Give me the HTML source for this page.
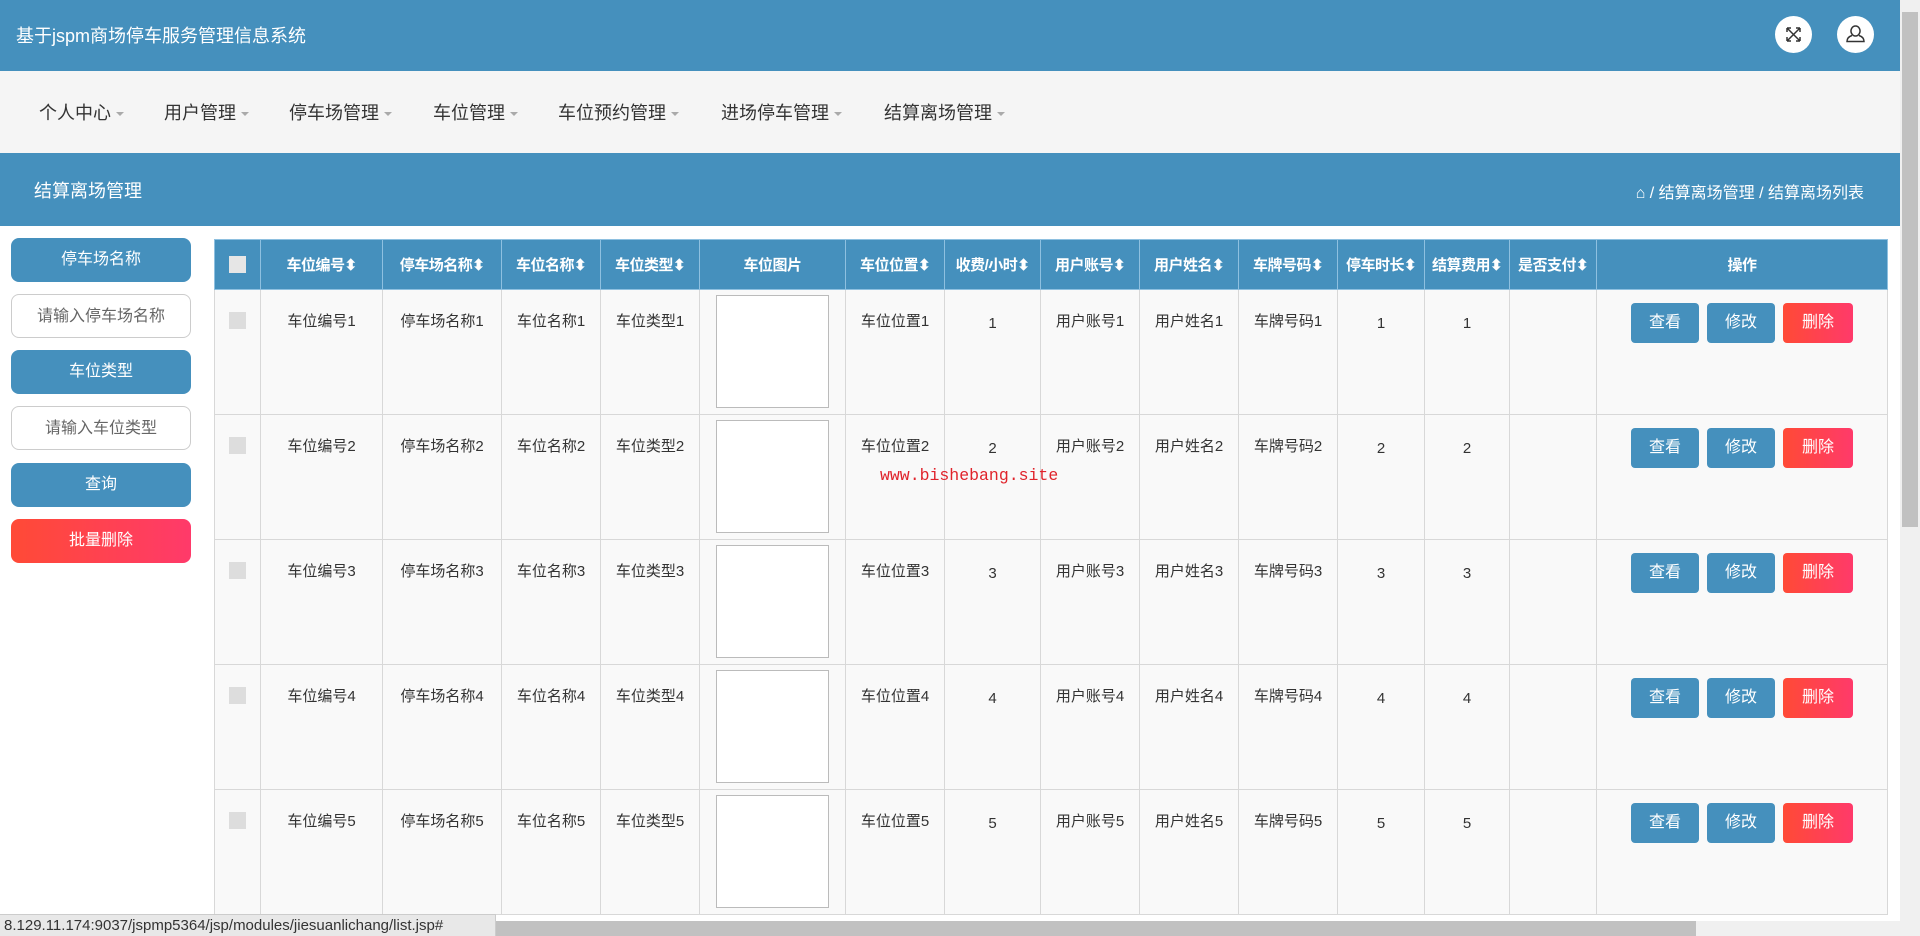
<!DOCTYPE html>
<html><head><meta charset="utf-8"><style>
*{box-sizing:border-box;margin:0;padding:0}
body{width:1920px;height:936px;overflow:hidden;background:#fff;font-family:"Liberation Sans","Noto Sans CJK SC",sans-serif;position:relative}
.hdr{position:absolute;left:0;top:0;width:1900px;height:71px;background:#4590bd}
.hdr .t{position:absolute;left:16px;top:22px;color:#fff;font-size:18px}
.circ{position:absolute;top:16px;width:37px;height:37px;border-radius:50%;background:#fff}
.nav{position:absolute;left:0;top:71px;width:1900px;height:82px;background:#f5f5f5}
.nav span{position:absolute;top:28px;font-size:18px;color:#333}
.nav span i{display:inline-block;width:0;height:0;border-left:4px solid transparent;border-right:4px solid transparent;border-top:4px solid #aaa;margin-left:5px;vertical-align:middle}
.ban{position:absolute;left:0;top:153px;width:1900px;height:73px;background:#4590bd;color:#fff}
.ban .l{position:absolute;left:34px;top:24px;font-size:18px}
.ban .r{position:absolute;right:36px;top:26px;font-size:16px}
.sb{position:absolute;left:11px;width:180px;height:44px;border-radius:8px;text-align:center;line-height:44px;font-size:16px;color:#fff;background:#4590bd}
.sb.in{background:#fff;border:1.5px solid #ccc;color:#666}
.sb.red{background:linear-gradient(90deg,#ff4a36,#ff3a6a)}
table{position:absolute;left:214px;top:239px;border-collapse:collapse;table-layout:fixed;width:1673px}
th{background:#4590bd;color:#fff;font-size:15px;height:50px;border:1px solid #8ec0e0;font-weight:bold;white-space:nowrap;letter-spacing:-0.5px}
td{background:#f9f9f9;border:1px solid #d8d8d8;height:125px;vertical-align:top;text-align:center;font-size:15px;color:#333;padding-top:22px;line-height:20px}
td.n{padding-top:24px}
.cb{display:inline-block;width:17px;height:17px;background:#ddd;margin-top:0}
th .cb{background:#e6e6e6;vertical-align:middle}
.img{width:113px;height:113px;border:1px solid #bbb;margin:-17px auto 0;background:#fff}
.b{display:inline-block;width:68px;height:40px;line-height:40px;border-radius:4px;color:#fff;font-size:16px;background:#4590bd;margin:-9px 4px 0}
.b.d{background:linear-gradient(90deg,#ff4a36,#ff3a6a);width:70px}
.wm{position:absolute;left:880px;top:466px;color:#e0232b;font-family:"Liberation Mono",monospace;font-size:16.5px}
.st{position:absolute;left:0;top:914px;width:496px;height:22px;background:#e8e8e8;border-top:1px solid #ccc;border-right:1px solid #ccc;font-size:15px;color:#333;padding:2px 0 0 4px;white-space:nowrap}
.hs{position:absolute;left:496px;top:921px;width:1404px;height:15px;background:#f0f0f0}
.hs div{width:1200px;height:15px;background:#c1c1c1}
.vs{position:absolute;left:1900px;top:0;width:20px;height:936px;background:#f0f0f0}
.vs div{position:absolute;left:2px;top:12px;width:16px;height:515px;background:#c1c1c1}
</style></head><body>
<div class="hdr"><div class="t">基于jspm商场停车服务管理信息系统</div>
<div class="circ" style="left:1775px"><svg width="37" height="37" viewBox="0 0 37 37" fill="none" stroke="#333" stroke-width="1.5"><path d="M12 12l13 13M25 12L12 25M12 12h4M12 12v4M25 12h-4M25 12v4M12 25h4M12 25v-4M25 25h-4M25 25v-4"/></svg></div>
<div class="circ" style="left:1837px"><svg width="37" height="37" viewBox="0 0 37 37" fill="none" stroke="#333" stroke-width="1.5"><path d="M18.5 10a4.5 5 0 1 0 0.01 0M15 19.5c-3 1-5 2.5-5 6h17c0-3.5-2-5-5-6"/></svg></div>
</div>
<div class="nav">
<span style="left:39px">个人中心<i></i></span><span style="left:164px">用户管理<i></i></span><span style="left:289px">停车场管理<i></i></span><span style="left:433px">车位管理<i></i></span><span style="left:558px">车位预约管理<i></i></span><span style="left:721px">进场停车管理<i></i></span><span style="left:884px">结算离场管理<i></i></span>
</div>
<div class="ban"><div class="l">结算离场管理</div><div class="r">⌂ / 结算离场管理 / 结算离场列表</div></div>
<div class="sb" style="top:238px">停车场名称</div>
<div class="sb in" style="top:294px">请输入停车场名称</div>
<div class="sb" style="top:350px">车位类型</div>
<div class="sb in" style="top:406px">请输入车位类型</div>
<div class="sb" style="top:463px">查询</div>
<div class="sb red" style="top:519px">批量删除</div>
<table>
<colgroup><col style="width:46px"><col style="width:122px"><col style="width:119px"><col style="width:99px"><col style="width:99px"><col style="width:146px"><col style="width:99px"><col style="width:96px"><col style="width:99px"><col style="width:99px"><col style="width:99px"><col style="width:87px"><col style="width:85px"><col style="width:87px"><col style="width:291px"></colgroup>
<tr><th><span class="cb"></span></th><th>车位编号⬍</th><th>停车场名称⬍</th><th>车位名称⬍</th><th>车位类型⬍</th><th>车位图片</th><th>车位位置⬍</th><th>收费/小时⬍</th><th>用户账号⬍</th><th>用户姓名⬍</th><th>车牌号码⬍</th><th>停车时长⬍</th><th>结算费用⬍</th><th>是否支付⬍</th><th>操作</th></tr>
<tr><td><span class="cb"></span></td><td>车位编号1</td><td>停车场名称1</td><td>车位名称1</td><td>车位类型1</td><td><div class="img"></div></td><td>车位位置1</td><td class="n">1</td><td>用户账号1</td><td>用户姓名1</td><td>车牌号码1</td><td class="n">1</td><td class="n">1</td><td></td><td><span class="b">查看</span><span class="b">修改</span><span class="b d">删除</span></td></tr>
<tr><td><span class="cb"></span></td><td>车位编号2</td><td>停车场名称2</td><td>车位名称2</td><td>车位类型2</td><td><div class="img"></div></td><td>车位位置2</td><td class="n">2</td><td>用户账号2</td><td>用户姓名2</td><td>车牌号码2</td><td class="n">2</td><td class="n">2</td><td></td><td><span class="b">查看</span><span class="b">修改</span><span class="b d">删除</span></td></tr>
<tr><td><span class="cb"></span></td><td>车位编号3</td><td>停车场名称3</td><td>车位名称3</td><td>车位类型3</td><td><div class="img"></div></td><td>车位位置3</td><td class="n">3</td><td>用户账号3</td><td>用户姓名3</td><td>车牌号码3</td><td class="n">3</td><td class="n">3</td><td></td><td><span class="b">查看</span><span class="b">修改</span><span class="b d">删除</span></td></tr>
<tr><td><span class="cb"></span></td><td>车位编号4</td><td>停车场名称4</td><td>车位名称4</td><td>车位类型4</td><td><div class="img"></div></td><td>车位位置4</td><td class="n">4</td><td>用户账号4</td><td>用户姓名4</td><td>车牌号码4</td><td class="n">4</td><td class="n">4</td><td></td><td><span class="b">查看</span><span class="b">修改</span><span class="b d">删除</span></td></tr>
<tr><td><span class="cb"></span></td><td>车位编号5</td><td>停车场名称5</td><td>车位名称5</td><td>车位类型5</td><td><div class="img"></div></td><td>车位位置5</td><td class="n">5</td><td>用户账号5</td><td>用户姓名5</td><td>车牌号码5</td><td class="n">5</td><td class="n">5</td><td></td><td><span class="b">查看</span><span class="b">修改</span><span class="b d">删除</span></td></tr>
</table>
<div class="wm">www.bishebang.site</div>
<div class="st">8.129.11.174:9037/jspmp5364/jsp/modules/jiesuanlichang/list.jsp#</div>
<div class="hs"><div></div></div>
<div class="vs"><div></div></div>
</body></html>
